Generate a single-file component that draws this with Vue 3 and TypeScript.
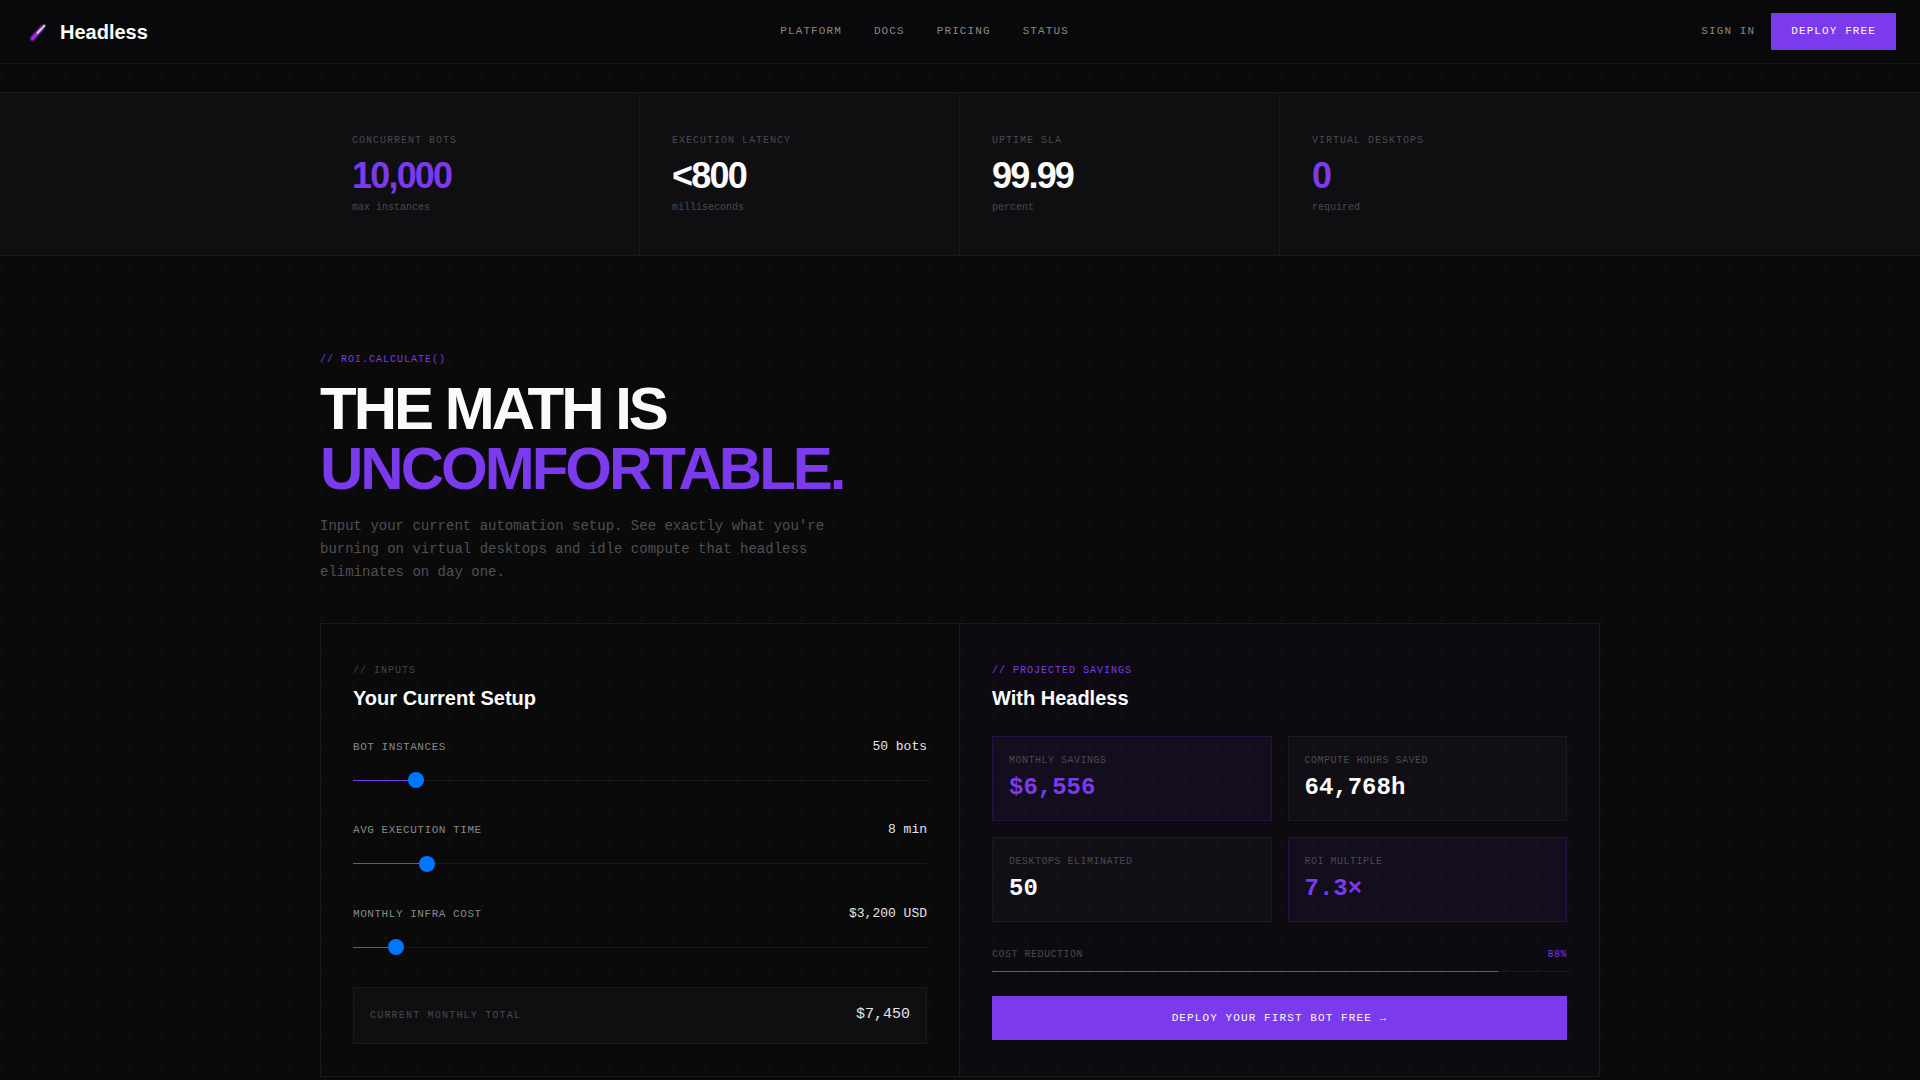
<script setup lang="ts">
import { computed, ref } from 'vue'

const bots = ref(50)
const minutes = ref(8)
const infra = ref(3200)

const fmt = (n: number) => Math.round(n).toLocaleString('en-US')
const total = computed(() => infra.value + bots.value * 85)
const savings = computed(() => total.value * 0.88)
const hours = computed(() => bots.value * minutes.value * 161.92)
const roi = computed(() => savings.value / (bots.value * 18))

const links = ['PLATFORM', 'DOCS', 'PRICING', 'STATUS']
const stats = [
  { label: 'CONCURRENT BOTS', value: '10,000', note: 'max instances', accent: true },
  { label: 'EXECUTION LATENCY', value: '<800', note: 'milliseconds', accent: false },
  { label: 'UPTIME SLA', value: '99.99', note: 'percent', accent: false },
  { label: 'VIRTUAL DESKTOPS', value: '0', note: 'required', accent: true },
]
const fill = (v: number, max: number) => ({
  background: `linear-gradient(to right, #7c3aed ${(v / max) * 100}%, #1a1a1d ${(v / max) * 100}%)`,
})
</script>

<template>
  <div class="page">
    <header class="nav">
      <div class="brand">
        <svg class="brand-icon" width="24" height="24" viewBox="0 0 24 24" aria-hidden="true">
          <path d="M8.5 18.5 L18.5 7.5" stroke="#7e22ce" stroke-width="6" stroke-linecap="round" opacity=".5" />
          <path d="M8.5 18.5 L17 9" stroke="#b02ad9" stroke-width="3.2" stroke-linecap="round" />
          <path d="M13.5 13 L20.5 5.5" stroke="#d6c8de" stroke-width="2" stroke-linecap="round" />
        </svg>
        <span>Headless</span>
      </div>
      <nav class="links">
        <a v-for="l in links" :key="l">{{ l }}</a>
      </nav>
      <div class="actions">
        <a class="signin">SIGN IN</a>
        <button class="deploy" type="button">DEPLOY FREE</button>
      </div>
    </header>

    <section class="stats">
      <div class="stats-row">
        <div v-for="s in stats" :key="s.label" class="stat">
          <div class="stat-label">{{ s.label }}</div>
          <div class="stat-value" :class="{ accent: s.accent }">{{ s.value }}</div>
          <div class="stat-note">{{ s.note }}</div>
        </div>
      </div>
    </section>

    <main class="roi">
      <div class="eyebrow">// ROI.CALCULATE()</div>
      <h1 class="title">THE MATH IS<br /><span>UNCOMFORTABLE.</span></h1>
      <p class="lead">
        Input your current automation setup. See exactly what you're burning on virtual desktops and idle compute
        that headless eliminates on day one.
      </p>

      <div class="calc">
        <div class="panel inputs">
          <div class="panel-tag">// INPUTS</div>
          <h2 class="panel-title">Your Current Setup</h2>

          <div class="field">
            <div class="field-head"><label>BOT INSTANCES</label><span>{{ bots }} bots</span></div>
            <input v-model.number="bots" type="range" min="1" max="500" :style="fill(bots, 500)" />
          </div>
          <div class="field">
            <div class="field-head"><label>AVG EXECUTION TIME</label><span>{{ minutes }} min</span></div>
            <input v-model.number="minutes" type="range" min="1" max="60" :style="fill(minutes, 60)" />
          </div>
          <div class="field">
            <div class="field-head"><label>MONTHLY INFRA COST</label><span>${{ fmt(infra) }} USD</span></div>
            <input v-model.number="infra" type="range" min="100" max="50000" step="100" :style="fill(infra, 50000)" />
          </div>

          <div class="summary">
            <span>CURRENT MONTHLY TOTAL</span>
            <strong>${{ fmt(total) }}</strong>
          </div>
        </div>

        <div class="panel results">
          <div class="panel-tag accent">// PROJECTED SAVINGS</div>
          <h2 class="panel-title">With Headless</h2>

          <div class="cards">
            <div class="card hot">
              <div class="card-label">MONTHLY SAVINGS</div>
              <div class="card-value accent">${{ fmt(savings) }}</div>
            </div>
            <div class="card">
              <div class="card-label">COMPUTE HOURS SAVED</div>
              <div class="card-value">{{ fmt(hours) }}h</div>
            </div>
            <div class="card">
              <div class="card-label">DESKTOPS ELIMINATED</div>
              <div class="card-value">{{ bots }}</div>
            </div>
            <div class="card hot">
              <div class="card-label">ROI MULTIPLE</div>
              <div class="card-value accent">{{ roi.toFixed(1) }}×</div>
            </div>
          </div>

          <div class="reduction">
            <span>COST REDUCTION</span>
            <span class="accent">88%</span>
          </div>
          <div class="bar"><div class="bar-fill"></div></div>

          <button class="cta" type="button">DEPLOY YOUR FIRST BOT FREE →</button>
        </div>
      </div>
    </main>
  </div>
</template>

<style>
html,
body {
  margin: 0;
  background: #0a0a0b;
}
</style>

<style scoped>
.page {
  min-height: 100vh;
  color: #fafafa;
  font-family: 'Liberation Mono', monospace;
  font-size: 14px;
  line-height: 1.5;
  background-color: #0a0a0b;
  background-image: radial-gradient(circle at 2px 10px, rgba(255, 255, 255, 0.03) 1px, transparent 2px);
  background-size: 32px 32px;
}

.nav {
  display: flex;
  align-items: center;
  justify-content: space-between;
  height: 63px;
  padding: 0 24px;
  background: #09090b;
  border-bottom: 1px solid #17171a;
}

.brand {
  display: flex;
  align-items: center;
  gap: 12px;
  font-family: 'Liberation Sans', sans-serif;
  font-size: 20px;
  font-weight: 700;
  color: #fafafa;
}

.brand-icon {
  filter: blur(0.6px);
}

.links {
  display: flex;
  gap: 32px;
}

.links a,
.signin {
  font-size: 11px;
  letter-spacing: 0.1em;
  color: #888;
}

.actions {
  display: flex;
  align-items: center;
  gap: 16px;
}

.deploy {
  padding: 10px 20px;
  border: 0;
  background: #7c3aed;
  color: #fafafa;
  font-family: inherit;
  font-size: 11px;
  line-height: 17px;
  letter-spacing: 0.1em;
}

.stats {
  margin-top: 28px;
  background: #0f0f11;
  border-top: 1px solid #1a1a1d;
  border-bottom: 1px solid #1a1a1d;
}

.stats-row {
  display: grid;
  grid-template-columns: repeat(4, 1fr);
  width: 1280px;
  margin: 0 auto;
}

.stat {
  padding: 40px 32px;
  border-right: 1px solid #1a1a1d;
}

.stat:last-child {
  border-right: 0;
}

.stat-label {
  margin-bottom: 8px;
  font-size: 10px;
  letter-spacing: 0.1em;
  color: #4a4a4f;
}

.stat-value {
  font-family: 'Liberation Sans', sans-serif;
  font-size: 36px;
  font-weight: 700;
  line-height: 1.1;
  letter-spacing: -0.05em;
  color: #fafafa;
}

.stat-note {
  margin-top: 4px;
  font-size: 10px;
  color: #4a4a4f;
}

.accent {
  color: #7c3aed;
}

.roi {
  width: 1280px;
  margin: 0 auto;
  padding: 96px 0;
}

.eyebrow {
  margin-bottom: 12px;
  font-size: 10px;
  letter-spacing: 0.1em;
  color: #7c3aed;
}

.title {
  margin: 0 0 16px;
  font-family: 'Liberation Sans', sans-serif;
  font-size: 60px;
  font-weight: 700;
  line-height: 1;
  letter-spacing: -0.05em;
  color: #fafafa;
}

.title span {
  color: #7c3aed;
}

.lead {
  max-width: 520px;
  margin: 0 0 39px;
  font-size: 14px;
  line-height: 23.1px;
  color: #4f4f54;
}

.calc {
  display: grid;
  grid-template-columns: 1fr 1fr;
  border: 1px solid #1a1a1d;
}

.panel {
  padding: 39px 32px 32px;
  min-width: 0;
}

.inputs {
  border-right: 1px solid #1a1a1d;
}

.results {
  background: rgba(124, 58, 237, 0.03);
}

.panel-tag {
  margin-bottom: 5px;
  font-size: 10px;
  letter-spacing: 0.1em;
  color: #444;
}

.panel-tag.accent {
  color: #7c3aed;
}

.panel-title {
  margin: 0 0 24px;
  font-family: 'Liberation Sans', sans-serif;
  font-size: 20px;
  font-weight: 700;
  line-height: 30px;
  color: #fafafa;
}

.results .panel-title {
  margin-bottom: 23px;
}

.field {
  display: flex;
  flex-direction: column;
  margin-bottom: 32px;
}

.field-head {
  display: flex;
  align-items: baseline;
  justify-content: space-between;
  height: 19px;
  margin-bottom: 16px;
}

.field-head label {
  font-size: 11px;
  letter-spacing: 0.05em;
  color: #888;
}

.field-head span {
  font-size: 13px;
  color: #e4e4e7;
}

input[type='range'] {
  display: block;
  width: 100%;
  height: 1px;
  margin: 8px 0 7.5px;
  padding: 0;
  -webkit-appearance: none;
  appearance: none;
  outline: none;
}

input[type='range']::-webkit-slider-thumb {
  -webkit-appearance: none;
  appearance: none;
  width: 16px;
  height: 16px;
  border-radius: 50%;
  background: #0075ff;
}

.summary {
  display: flex;
  align-items: center;
  justify-content: space-between;
  padding: 16px;
  background: #0f0f11;
  border: 1px solid #1a1a1d;
}

.summary span {
  font-size: 10px;
  letter-spacing: 0.12em;
  color: #4a4a4f;
}

.summary strong {
  font-size: 15px;
  font-weight: 400;
  color: #e4e4e7;
}

.cards {
  display: grid;
  grid-template-columns: 1fr 1fr;
  gap: 16px;
}

.card {
  padding: 16px;
  background: rgba(255, 255, 255, 0.02);
  border: 1px solid #1c1b22;
}

.card.hot {
  background: rgba(124, 58, 237, 0.055);
  border-color: rgba(124, 58, 237, 0.18);
}

.card-label {
  margin-bottom: 4px;
  font-size: 10px;
  letter-spacing: 0.05em;
  color: #4a4a4f;
}

.card-value {
  font-size: 24px;
  font-weight: 700;
  line-height: 32px;
  color: #fafafa;
}

.card-value.accent {
  color: #7c3aed;
}

.reduction {
  display: flex;
  justify-content: space-between;
  margin-top: 25px;
  font-size: 10px;
  letter-spacing: 0.05em;
  color: #4a4a4f;
}

.reduction .accent {
  color: #7c3aed;
}

.bar {
  height: 1px;
  margin: 9px 0 24px;
  background: #1a1a1d;
}

.bar-fill {
  width: 88%;
  height: 100%;
  background: #7c3aed;
}

.cta {
  display: block;
  width: 100%;
  padding: 14px 0;
  border: 0;
  background: #7c3aed;
  color: #fafafa;
  font-family: inherit;
  font-size: 11px;
  line-height: 16px;
  letter-spacing: 0.1em;
}
</style>
